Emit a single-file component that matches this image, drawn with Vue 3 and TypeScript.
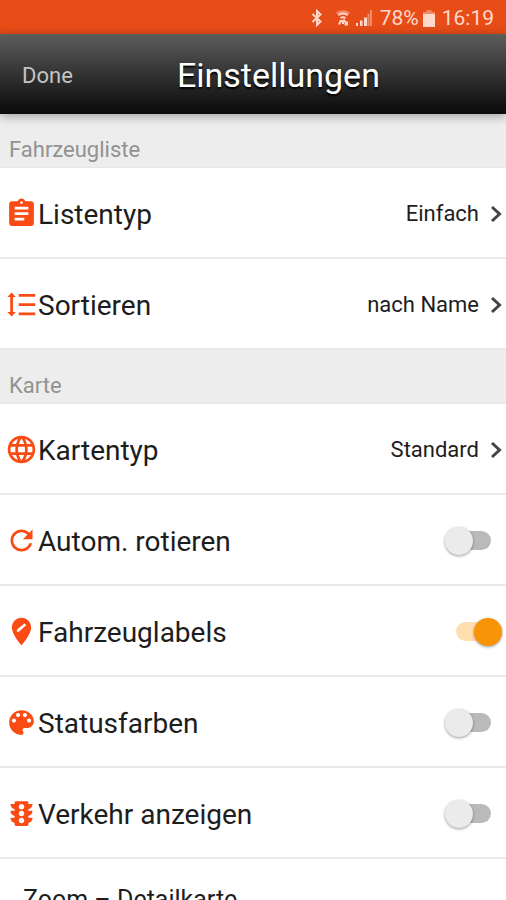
<script setup lang="ts">
import { reactive } from 'vue'

type IconName = 'list' | 'sort' | 'globe' | 'refresh' | 'pin' | 'palette' | 'traffic'

interface LinkRow {
  kind: 'link'
  icon: IconName
  label: string
  value: string
}

interface SwitchRow {
  kind: 'switch'
  icon: IconName
  label: string
  on: boolean
}

interface Section {
  title: string
  rows: (LinkRow | SwitchRow)[]
}

const icons: Record<IconName, string> = {
  list: 'M19 3h-4.18C14.4 1.84 13.3 1 12 1c-1.3 0-2.4.84-2.82 2H5c-1.1 0-2 .9-2 2v14c0 1.1.9 2 2 2h14c1.1 0 2-.9 2-2V5c0-1.1-.9-2-2-2zm-7 0c.55 0 1 .45 1 1s-.45 1-1 1-1-.45-1-1 .45-1 1-1zm2 14H7v-2h7v2zm3-4H7v-2h10v2zm0-4H7V7h10v2z',
  sort: 'M5.8 6.6h2.1L4.8 3.2 1.7 6.6h2.1v10.8H1.7l3.1 3.4 3.1-3.4H5.8zM10 4.4v2h12v-2zM10 11v2h12v-2zM10 17.8v2h12v-2z',
  globe: 'M11.99 2C6.47 2 2 6.48 2 12s4.47 10 9.99 10C17.52 22 22 17.52 22 12S17.52 2 11.99 2zm6.93 6h-2.95c-.32-1.25-.78-2.45-1.38-3.56 1.84.63 3.37 1.91 4.33 3.56zM12 4.04c.83 1.2 1.48 2.53 1.91 3.96h-3.82c.43-1.43 1.08-2.76 1.91-3.96zM4.26 14C4.1 13.36 4 12.69 4 12s.1-1.36.26-2h3.38c-.08.66-.14 1.32-.14 2 0 .68.06 1.34.14 2H4.26zm.82 2h2.95c.32 1.25.78 2.45 1.38 3.56-1.84-.63-3.37-1.9-4.33-3.56zm2.95-8H5.08c.96-1.66 2.49-2.93 4.33-3.56C8.81 5.55 8.35 6.75 8.03 8zM12 19.96c-.83-1.2-1.48-2.53-1.91-3.96h3.82c-.43 1.43-1.08 2.76-1.91 3.96zM14.34 14H9.66c-.09-.66-.16-1.32-.16-2 0-.68.07-1.35.16-2h4.68c.09.65.16 1.32.16 2 0 .68-.07 1.34-.16 2zm.25 5.56c.6-1.11 1.06-2.31 1.38-3.56h2.95c-.96 1.65-2.49 2.93-4.33 3.56zM16.36 14c.08-.66.14-1.32.14-2 0-.68-.06-1.34-.14-2h3.38c.16.64.26 1.31.26 2s-.1 1.36-.26 2h-3.38z',
  refresh: 'M17.65 6.35C16.2 4.9 14.21 4 12 4c-4.42 0-7.99 3.58-7.99 8s3.57 8 7.99 8c3.73 0 6.84-2.55 7.73-6h-2.08c-.82 2.33-3.04 4-5.65 4-3.31 0-6-2.69-6-6s2.69-6 6-6c1.66 0 3.14.69 4.22 1.78L13 11h7V4l-2.35 2.35z',
  pin: 'M12 2C8.14 2 5 5.14 5 9c0 5.25 7 13 7 13s7-7.75 7-13c0-3.86-3.14-7-7-7zM10.1 12.2H8.6v-1.5l5.2-4.4q.4-.3.7 0l.7.7q.3.4 0 .7z',
  palette: 'M12 3c-4.97 0-9 4.03-9 9s4.03 9 9 9c.83 0 1.5-.67 1.5-1.5 0-.39-.15-.74-.39-1.01-.23-.26-.38-.61-.38-.99 0-.83.67-1.5 1.5-1.5H16c2.76 0 5-2.24 5-5 0-4.42-4.03-8-9-8zm-5.5 9c-.83 0-1.5-.67-1.5-1.5S5.67 9 6.5 9 8 9.67 8 10.5 7.33 12 6.5 12zm3-4C8.67 8 8 7.33 8 6.5S8.67 5 9.5 5s1.5.67 1.5 1.5S10.33 8 9.5 8zm5 0c-.83 0-1.5-.67-1.5-1.5S13.67 5 14.5 5s1.5.67 1.5 1.5S15.33 8 14.5 8zm3 4c-.83 0-1.5-.67-1.5-1.5S16.67 9 17.5 9s1.5.67 1.5 1.5-.67 1.5-1.5 1.5z',
  traffic: 'M20 10h-3V8.86c1.72-.45 3-2 3-3.86h-3V4c0-.55-.45-1-1-1H8c-.55 0-1 .45-1 1v1H4c0 1.86 1.28 3.41 3 3.86V10H4c0 1.86 1.28 3.41 3 3.86V15H4c0 1.86 1.28 3.41 3 3.86V20c0 .55.45 1 1 1h8c.55 0 1-.45 1-1v-1.14c1.72-.45 3-2 3-3.86h-3v-1.14c1.72-.45 3-2 3-3.86zm-8 9c-1.11 0-2-.9-2-2s.89-2 2-2c1.1 0 2 .9 2 2s-.89 2-2 2zm0-5c-1.11 0-2-.9-2-2s.89-2 2-2c1.1 0 2 .9 2 2s-.89 2-2 2zm0-5c-1.11 0-2-.9-2-2 0-1.11.89-2 2-2 1.1 0 2 .89 2 2 0 1.1-.89 2-2 2z',
}

const sections = reactive<Section[]>([
  {
    title: 'Fahrzeugliste',
    rows: [
      { kind: 'link', icon: 'list', label: 'Listentyp', value: 'Einfach' },
      { kind: 'link', icon: 'sort', label: 'Sortieren', value: 'nach Name' },
    ],
  },
  {
    title: 'Karte',
    rows: [
      { kind: 'link', icon: 'globe', label: 'Kartentyp', value: 'Standard' },
      { kind: 'switch', icon: 'refresh', label: 'Autom. rotieren', on: false },
      { kind: 'switch', icon: 'pin', label: 'Fahrzeuglabels', on: true },
      { kind: 'switch', icon: 'palette', label: 'Statusfarben', on: false },
      { kind: 'switch', icon: 'traffic', label: 'Verkehr anzeigen', on: false },
    ],
  },
])
</script>

<template>
  <div class="screen">
    <div class="status">
      <svg class="bluetooth" viewBox="0 0 12 18" aria-hidden="true">
        <path d="M1.5 5l8 7.5L6 16V2l3.5 3.5-8 7.5" />
      </svg>
      <svg class="wifi" viewBox="0 0 16 18" aria-hidden="true">
        <path class="faint" d="M1 3.5Q8-1 15 3.5L12.5 7Q8 4 3.5 7z" />
        <path class="line" d="M3.5 6Q8 3 12.5 6M5.5 9Q8 7.3 10.5 9M6 11.5L4 15.5M4.5 12h3.5v3M8.5 10.5l3.5 5M9.5 15.5h2.5v-3" />
      </svg>
      <svg class="signal" viewBox="0 0 18 18" aria-hidden="true">
        <path d="M1 14h2v3H1zM5 11.5h2.5V17H5zM9 8.5h3V17H9z" />
        <path class="faint" d="M12.5 4.5h2V17h-2zM15 1h2v16h-2z" />
      </svg>
      <span>78%</span>
      <svg class="battery" viewBox="0 0 12 18" aria-hidden="true">
        <path class="faint" d="M3.5 1h5v2H12v3H0V3h3.5z" />
        <path d="M0 5h12v13H0z" />
      </svg>
      <span>16:19</span>
    </div>

    <header class="bar">
      <button class="done" type="button">Done</button>
      <h1 class="title">Einstellungen</h1>
    </header>

    <main class="content">
      <section v-for="section in sections" :key="section.title">
        <h2 class="heading">{{ section.title }}</h2>
        <ul class="rows">
          <li v-for="row in section.rows" :key="row.label">
            <button v-if="row.kind === 'link'" class="row" type="button">
              <svg class="icon" viewBox="0 0 24 24" aria-hidden="true"><path :d="icons[row.icon]" /></svg>
              <span class="label">{{ row.label }}</span>
              <span class="value">{{ row.value }}</span>
              <svg class="chevron" viewBox="0 0 12 18" aria-hidden="true"><path d="M2 2l7.5 7L2 16" /></svg>
            </button>
            <label v-else class="row">
              <svg class="icon" viewBox="0 0 24 24" aria-hidden="true"><path :d="icons[row.icon]" /></svg>
              <span class="label">{{ row.label }}</span>
              <input v-model="row.on" class="toggle" type="checkbox" role="switch" />
            </label>
          </li>
        </ul>
      </section>
      <div class="zoom">Zoom – Detailkarte</div>
    </main>
  </div>
</template>

<style>
body {
  background: #fff;
}
</style>

<style scoped>
.screen {
  display: flex;
  flex-direction: column;
  height: 100vh;
  overflow: hidden;
  font-family: Roboto, "Liberation Sans", sans-serif;
  color: #1d1d1d;
  background: #fff;
}

button {
  border: 0;
  margin: 0;
  background: none;
  font-family: inherit;
  color: inherit;
  cursor: pointer;
}

.status {
  flex: none;
  display: flex;
  align-items: center;
  justify-content: flex-end;
  gap: 4px;
  height: 34px;
  padding: 2px 12px 0 0;
  box-sizing: border-box;
  background: #e84c17;
  color: #ffd9cc;
  font-size: 21px;
}

.status svg {
  height: 18px;
  fill: #ffd9cc;
}

.status .faint {
  opacity: 0.45;
}

.status .bluetooth {
  width: 12px;
  margin-right: 8px;
  fill: none;
  stroke: #ffd9cc;
  stroke-width: 2;
}

.wifi {
  width: 16px;
}

.wifi .line {
  fill: none;
  stroke: #ffd9cc;
  stroke-width: 2;
}

.signal {
  width: 18px;
  margin-right: 3px;
}

.battery {
  width: 12px;
  margin-right: 3px;
}

.bar {
  flex: none;
  z-index: 1;
  display: flex;
  align-items: center;
  height: 80px;
  padding: 2px 22px 0;
  box-sizing: border-box;
  background: linear-gradient(#5b5d5b, #333 50%, #111 90%, #0c0c0c);
  box-shadow: 0 2px 10px rgba(0, 0, 0, 0.35);
}

.done {
  padding: 0;
  font-size: 22px;
  color: #c4c4c4;
}

.title {
  flex: 1;
  margin: 0;
  font-size: 34px;
  font-weight: 400;
  text-align: center;
  color: #fff;
  text-shadow: 0 2px 2px #000;
}

.content {
  flex: 1;
  min-height: 0;
  overflow-y: auto;
  scrollbar-width: none;
}

.heading {
  margin: 0;
  padding: 23px 9px 5px;
  border-bottom: 1px solid #e6e6e6;
  background: #ededed;
  font-size: 22px;
  line-height: 25px;
  font-weight: 400;
  color: #929292;
}

.rows {
  margin: 0;
  padding: 0;
  list-style: none;
}

.row {
  display: flex;
  align-items: center;
  width: 100%;
  height: 91px;
  padding: 2px 4px 0 5px;
  box-sizing: border-box;
  border-bottom: 2px solid #e9e9e9;
  text-align: left;
  cursor: pointer;
}

.icon {
  flex: none;
  width: 33px;
  height: 33px;
  fill: #fb4b14;
}

.label {
  flex: 1;
  padding-top: 2px;
  font-size: 28px;
  line-height: 34px;
}

.value {
  font-size: 22px;
}

.chevron {
  flex: none;
  width: 12px;
  height: 18px;
  margin-left: 11px;
  fill: none;
  stroke: #444;
  stroke-width: 3;
}

.toggle {
  flex: none;
  appearance: none;
  display: grid;
  align-items: center;
  width: 57px;
  height: 28px;
  margin: 0;
  cursor: pointer;
}

.toggle::before,
.toggle::after {
  content: "";
  grid-area: 1 / 1;
}

.toggle::before {
  justify-self: center;
  width: 35px;
  height: 19px;
  border-radius: 10px;
  background: #bababa;
}

.toggle::after {
  justify-self: start;
  width: 28px;
  height: 28px;
  border-radius: 50%;
  background: #ebebeb;
  box-shadow: 0 1px 3px rgba(0, 0, 0, 0.4);
}

.toggle:checked::before {
  background: #ffdfb0;
}

.toggle:checked::after {
  justify-self: end;
  background: #f99406;
}

.zoom {
  padding: 26px 23px;
  font-size: 25px;
  line-height: 30px;
}
</style>
